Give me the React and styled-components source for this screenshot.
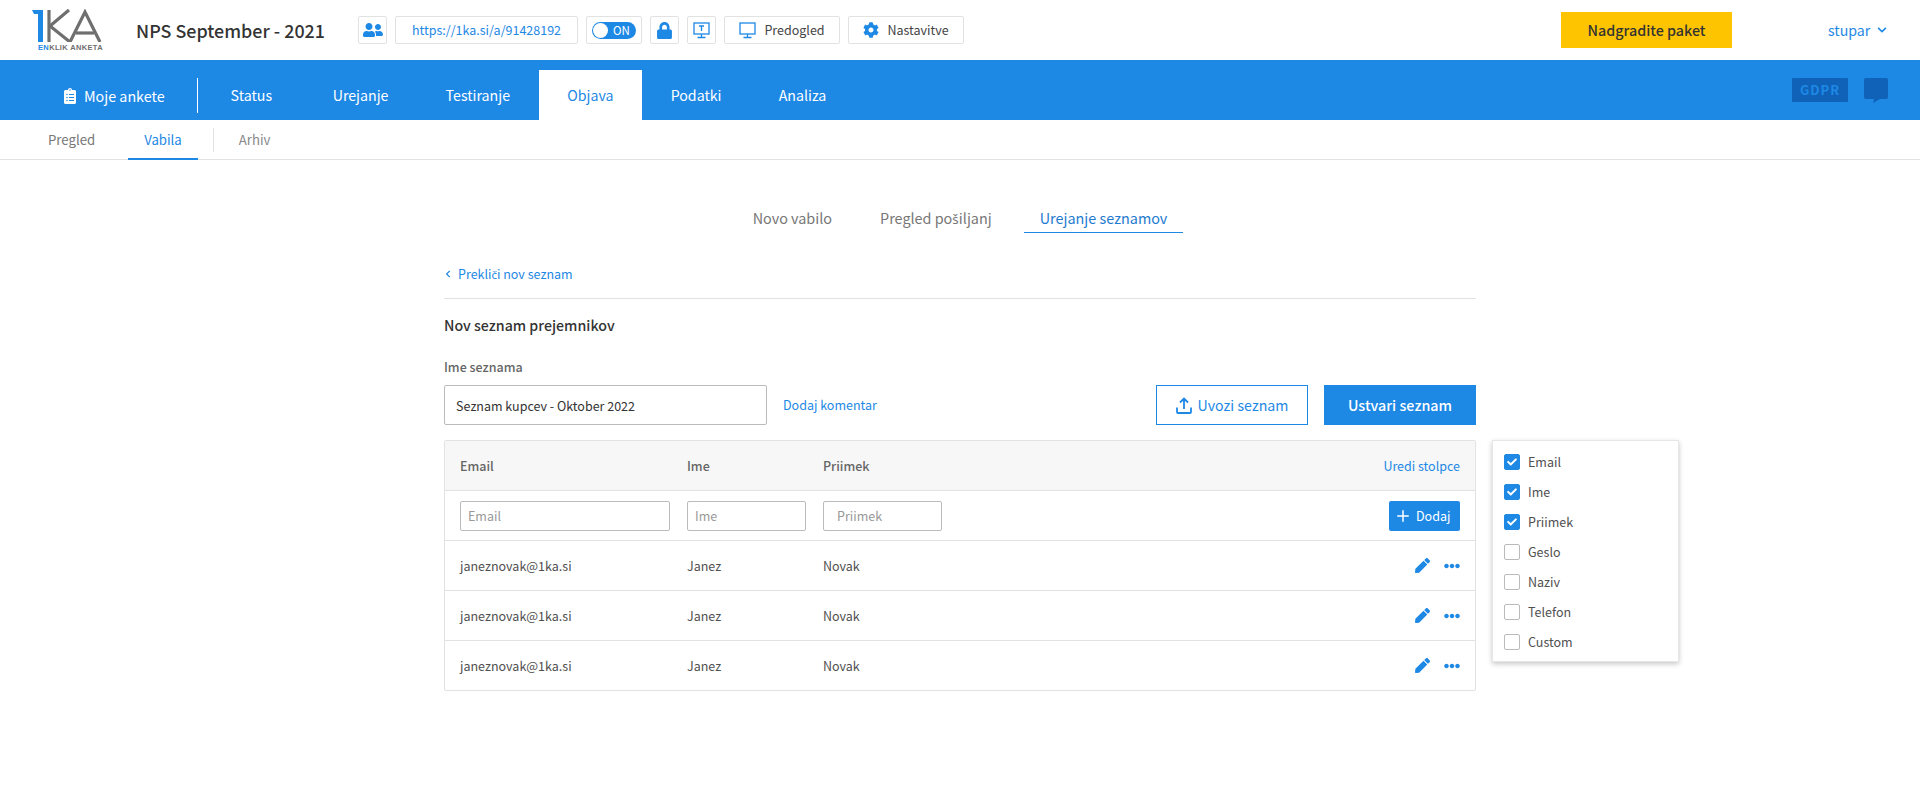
import React from 'react';
import styled, { createGlobalStyle } from 'styled-components';
import { FaUserFriends, FaLock, FaCog, FaPen, FaEllipsisH, FaClipboardList, FaChevronLeft, FaChevronDown, FaCheck } from 'react-icons/fa';
import { Plus } from 'lucide-react';

const BLUE = '#1e88e5';

const Global = createGlobalStyle`
  * { box-sizing: border-box; }
  body {
    margin: 0;
    background: #fff;
    color: #333;
    font-family: "Noto Sans CJK SC", "Open Sans", sans-serif;
    font-size: 12.5px;
    line-height: 20px;
  }
`;

const Logo = () => (
  <LogoBox>
    <svg width="73" height="33" viewBox="0 0 73 33">
      <polygon points="0,1 11,1 11,33 6,33 6,5 2,5" fill={BLUE} />
      <g fill="none" stroke="#6f6f6f" strokeWidth="3.2">
        <line x1="17" y1="1" x2="17" y2="33" />
        <line x1="37" y1="1" x2="18" y2="17" />
        <line x1="18" y1="17" x2="38" y2="33" />
        <polyline points="38,33 53,3 68,33" />
        <line x1="44" y1="24" x2="62" y2="24" />
      </g>
    </svg>
    <LogoText><b>EN</b>KLIK ANKETA</LogoText>
  </LogoBox>
);

const MonitorIcon = ({ letter }) => (
  <svg width="17" height="17" viewBox="0 0 17 17" fill="none" stroke={BLUE} strokeWidth="1.3">
    <rect x="1" y="1" width="15" height="11" />
    <path d="M8.5 12v3M4.5 15.5h8" />
    {letter && <path d="M6 4h5M8.5 4v5" />}
  </svg>
);

const UploadIcon = () => (
  <svg width="16" height="17" viewBox="0 0 16 17" fill="none" stroke={BLUE} strokeWidth="1.8">
    <path d="M8 12V2M4 5.5 8 1.5l4 4M1 10.5V15a1 1 0 0 0 1 1h12a1 1 0 0 0 1-1v-4.5" />
  </svg>
);

const ChatIcon = () => (
  <svg width="24" height="25" viewBox="0 0 24 25">
    <path d="M2 0h20a2 2 0 0 1 2 2v17a2 2 0 0 1-2 2h-6l-7 4 1-4H2a2 2 0 0 1-2-2V2a2 2 0 0 1 2-2z" fill="#0f62b8" />
  </svg>
);

const mainTabs = ['Status', 'Urejanje', 'Testiranje', 'Objava', 'Podatki', 'Analiza'];
const columns = ['Email', 'Ime', 'Priimek', 'Geslo', 'Naziv', 'Telefon', 'Custom'];
const checked = ['Email', 'Ime', 'Priimek'];
const rows = [1, 2, 3];

export default function App() {
  return (
    <>
      <Global />
      <Header>
        <Logo />
        <Title>NPS September - 2021</Title>
        <Tools>
          <ToolBtn><FaUserFriends size={20} color={BLUE} /></ToolBtn>
          <UrlBtn>https://1ka.si/a/91428192</UrlBtn>
          <ToolBtn $wide>
            <Toggle><Knob /><span>ON</span></Toggle>
          </ToolBtn>
          <ToolBtn><FaLock size={17} color={BLUE} /></ToolBtn>
          <ToolBtn><MonitorIcon letter /></ToolBtn>
          <LabelBtn><MonitorIcon />Predogled</LabelBtn>
          <LabelBtn><FaCog size={16} color={BLUE} />Nastavitve</LabelBtn>
        </Tools>
        <Upgrade>Nadgradite paket</Upgrade>
        <UserMenu>stupar<FaChevronDown size={10} /></UserMenu>
      </Header>

      <MainNav>
        <MyPolls><FaClipboardList size={16} />Moje ankete</MyPolls>
        {mainTabs.map(t => <MainTab key={t} $active={t === 'Objava'}>{t}</MainTab>)}
        <NavRight>
          <Gdpr>GDPR</Gdpr>
          <ChatIcon />
        </NavRight>
      </MainNav>

      <SubNav>
        <SubTab>Pregled</SubTab>
        <SubTab $active>Vabila</SubTab>
        <SubDivider />
        <SubTab $muted>Arhiv</SubTab>
      </SubNav>

      <Steps>
        <Step>Novo vabilo</Step>
        <Step>Pregled po<Accent>š</Accent>iljanj</Step>
        <Step $active>Urejanje seznamov</Step>
      </Steps>

      <Content>
        <BackLink><FaChevronLeft size={8} /><span>Prekli<Accent>č</Accent>i nov seznam</span></BackLink>
        <Heading>Nov seznam prejemnikov</Heading>
        <FieldLabel>Ime seznama</FieldLabel>
        <FormRow>
          <NameInput defaultValue="Seznam kupcev - Oktober 2022" />
          <TextLink>Dodaj komentar</TextLink>
          <Actions>
            <OutlineBtn><UploadIcon />Uvozi seznam</OutlineBtn>
            <PrimaryBtn>Ustvari seznam</PrimaryBtn>
          </Actions>
        </FormRow>

        <TableWrap>
          <Table>
            <HeadRow>
              <span>Email</span>
              <span>Ime</span>
              <span>Priimek</span>
              <TextLink>Uredi stolpce</TextLink>
            </HeadRow>
            <Row>
              <CellInput placeholder="Email" />
              <CellInput placeholder="Ime" />
              <CellInput placeholder="Priimek" $indent />
              <AddBtn><Plus size={18} />Dodaj</AddBtn>
            </Row>
            {rows.map(r => (
              <Row key={r}>
                <span>janeznovak@1ka.si</span>
                <span>Janez</span>
                <span>Novak</span>
                <RowIcons>
                  <FaPen size={15} />
                  <FaEllipsisH size={16} />
                </RowIcons>
              </Row>
            ))}
          </Table>
          <ColumnMenu>
            {columns.map(c => (
              <MenuItem key={c}>
                <Check $on={checked.includes(c)}>
                  {checked.includes(c) && <FaCheck size={10} color="#fff" />}
                </Check>
                {c}
              </MenuItem>
            ))}
          </ColumnMenu>
        </TableWrap>
      </Content>
    </>
  );
}

const Header = styled.header`
  height: 60px;
  display: flex;
  align-items: center;
  padding: 0 32px;
`;
const LogoBox = styled.div`
  width: 104px;
  height: 50px;
  padding-top: 4px;
  svg { display: block; }
`;
const LogoText = styled.div`
  font-family: "Liberation Sans", sans-serif;
  font-size: 7.5px;
  font-weight: 700;
  line-height: 10px;
  margin: 1px 0 0 6px;
  color: #6f6f6f;
  letter-spacing: 0.35px;
  white-space: nowrap;
  b { color: ${BLUE}; }
`;
const Title = styled.div`
  font-size: 17.9px;
  font-weight: 500;
  line-height: 28px;
  width: 222px;
`;
const Tools = styled.div`
  display: flex;
  gap: 8px;
`;
const ToolBtn = styled.div`
  width: ${p => (p.$wide ? '56px' : '29px')};
  height: 28px;
  border: 1px solid #e2e2e2;
  border-radius: 2px;
  display: flex;
  align-items: center;
  justify-content: center;
`;
const UrlBtn = styled(ToolBtn)`
  width: 183px;
  color: ${BLUE};
`;
const LabelBtn = styled(ToolBtn)`
  width: 116px;
  gap: 8px;
  color: #444;
`;
const Toggle = styled.div`
  width: 44px;
  height: 17px;
  border-radius: 9px;
  background: ${BLUE};
  color: #fff;
  font-size: 11.5px;
  line-height: 17px;
  display: flex;
  align-items: center;
  gap: 5px;
  padding-left: 1px;
`;
const Knob = styled.i`
  width: 15px;
  height: 15px;
  border-radius: 50%;
  background: #fff;
`;
const Upgrade = styled.div`
  margin-left: auto;
  width: 171px;
  height: 36px;
  background: #ffc400;
  color: #333;
  font-size: 14.3px;
  font-weight: 500;
  display: flex;
  align-items: center;
  justify-content: center;
`;
const UserMenu = styled.div`
  margin-left: 96px;
  width: 60px;
  color: ${BLUE};
  font-size: 14.2px;
  display: flex;
  align-items: center;
  gap: 7px;
  white-space: nowrap;
`;
const MainNav = styled.nav`
  height: 60px;
  background: ${BLUE};
  display: flex;
  align-items: flex-end;
  padding-left: 62px;
`;
const MyPolls = styled.div`
  width: 136px;
  height: 35px;
  margin-bottom: 7px;
  margin-right: 4px;
  border-right: 1px solid #fff;
  color: #fff;
  font-size: 14.3px;
  display: flex;
  align-items: center;
  gap: 6px;
`;
const MainTab = styled.div`
  height: 50px;
  padding: 0 28.6px;
  display: flex;
  align-items: center;
  font-size: 14.2px;
  background: ${p => (p.$active ? '#fff' : 'transparent')};
  color: ${p => (p.$active ? BLUE : '#fff')};
  ${MyPolls} + & { padding-right: 32px; }
`;
const NavRight = styled.div`
  margin-left: auto;
  padding-right: 32px;
  align-self: center;
  display: flex;
  align-items: center;
  gap: 16px;
`;
const Gdpr = styled.div`
  width: 56px;
  height: 24px;
  background: #0f62b8;
  color: ${BLUE};
  border-radius: 1px;
  font-size: 13px;
  font-weight: 700;
  letter-spacing: 1px;
  text-align: center;
  line-height: 24px;
`;
const SubNav = styled.div`
  height: 40px;
  border-bottom: 1px solid #e2e2e2;
  display: flex;
  align-items: center;
  padding-left: 32px;
  font-size: 13.2px;
`;
const SubTab = styled.div`
  height: 40px;
  display: flex;
  align-items: center;
  padding: 2px 16px 0;
  color: ${p => (p.$active ? BLUE : p.$muted ? '#888' : '#777')};
  border-bottom: 2px solid ${p => (p.$active ? BLUE : 'transparent')};
  margin-bottom: -1px;
  & + & { margin-left: 17px; }
`;
const SubDivider = styled.div`
  width: 1px;
  height: 24px;
  background: #e2e2e2;
  margin: 0 9px 0 15px;
`;
const Steps = styled.div`
  display: flex;
  justify-content: center;
  gap: 16px;
  margin-top: 44px;
  height: 29px;
`;
const Step = styled.div`
  padding: 0 16px;
  font-size: 14.4px;
  line-height: 28px;
  color: ${p => (p.$active ? '#1e7bd0' : '#777')};
  border-bottom: 1px solid ${p => (p.$active ? BLUE : 'transparent')};
`;
// č and š are taken from a second family: the first one sets the letter after them on top of them
const Accent = styled.span`
  font-family: "Noto Sans", sans-serif;
  font-size: 0.92em;
`;
const Content = styled.main`
  width: 1032px;
  margin: 0 0 0 444px;
  padding-top: 31px;
`;
const BackLink = styled.div`
  height: 35px;
  border-bottom: 1px solid #e2e2e2;
  padding-bottom: 14px;
  color: ${BLUE};
  display: flex;
  align-items: flex-start;
  gap: 6px;
  svg { margin-top: 6px; }
`;
const Heading = styled.h2`
  margin: 16px 0 0;
  font-size: 14.2px;
  font-weight: 500;
  line-height: 20px;
`;
const FieldLabel = styled.label`
  display: block;
  margin-top: 22px;
  font-weight: 500;
  color: #666;
`;
const FormRow = styled.div`
  display: flex;
  align-items: center;
  margin-top: 8px;
`;
const NameInput = styled.input`
  width: 323px;
  height: 40px;
  border: 1px solid #bbb;
  border-radius: 2px;
  padding: 0 11px;
  font: inherit;
  color: #333;
  outline: none;
`;
const TextLink = styled.span`
  color: ${BLUE};
  font-weight: 400;
  margin-left: 16px;
`;
const Actions = styled.div`
  margin-left: auto;
  display: flex;
  gap: 16px;
`;
const OutlineBtn = styled.div`
  width: 152px;
  height: 40px;
  border: 1px solid ${BLUE};
  color: ${BLUE};
  font-size: 14.2px;
  display: flex;
  align-items: center;
  justify-content: center;
  gap: 6px;
`;
const PrimaryBtn = styled.div`
  width: 152px;
  height: 40px;
  background: ${BLUE};
  color: #fff;
  font-size: 14.3px;
  font-weight: 500;
  display: flex;
  align-items: center;
  justify-content: center;
`;
const TableWrap = styled.div`
  position: relative;
  margin-top: 15px;
`;
const Table = styled.div`
  border: 1px solid #e2e2e2;
  border-radius: 2px;
`;
const Row = styled.div`
  height: 50px;
  padding: 0 15px;
  display: grid;
  grid-template-columns: 227px 136px 1fr auto;
  align-items: center;
  color: #505050;
  border-top: 1px solid #e2e2e2;
`;
const HeadRow = styled(Row)`
  height: 49px;
  border-top: 0;
  background: #f7f7f7;
  font-weight: 500;
  color: #666;
  ${TextLink} { margin: 0; }
`;
const CellInput = styled.input`
  width: ${p => (p.$indent ? '119px' : 'calc(100% - 17px)')};
  height: 30px;
  border: 1px solid #bbb;
  border-radius: 2px;
  padding: 0 ${p => (p.$indent ? '13px' : '7px')};
  font: inherit;
  outline: none;
  &::placeholder { color: #999; }
`;
const AddBtn = styled.div`
  width: 71px;
  height: 30px;
  padding-left: 5px;
  border-radius: 2px;
  background: ${BLUE};
  color: #fff;
  display: flex;
  align-items: center;
  gap: 4px;
`;
const RowIcons = styled.div`
  color: ${BLUE};
  display: flex;
  align-items: center;
  gap: 14px;
`;
const ColumnMenu = styled.div`
  position: absolute;
  left: 1048px;
  top: 0;
  width: 187px;
  padding: 6px 11px 4px;
  background: #fff;
  border: 1px solid #e6e6e6;
  box-shadow: 0 2px 5px rgba(0, 0, 0, 0.22);
`;
const MenuItem = styled.div`
  height: 30px;
  display: flex;
  align-items: center;
  gap: 8px;
  color: #505050;
`;
const Check = styled.span`
  width: 16px;
  height: 16px;
  border-radius: 2px;
  border: 1px solid ${p => (p.$on ? BLUE : '#bbb')};
  background: ${p => (p.$on ? BLUE : '#fff')};
  display: flex;
  align-items: center;
  justify-content: center;
`;
